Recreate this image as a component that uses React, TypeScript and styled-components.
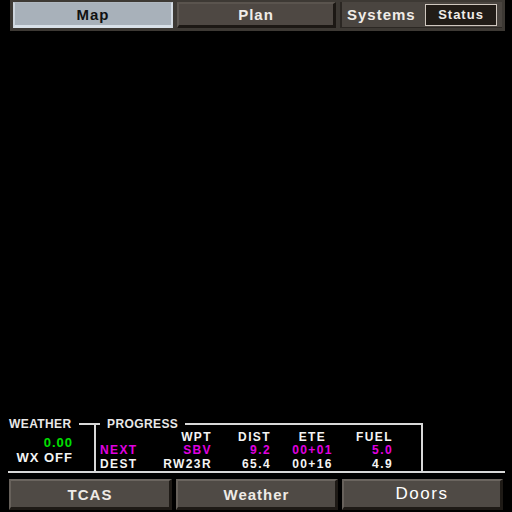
import styled, { createGlobalStyle } from "styled-components";

const GlobalStyle = createGlobalStyle`
  html, body {
    margin: 0;
    padding: 0;
    background: #000;
  }
  body {
    font-family: "Liberation Sans", Arial, sans-serif;
  }
`;

const Screen = styled.div`
  width: 512px;
  height: 512px;
  display: flex;
  flex-direction: column;
  background: #000;
  overflow: hidden;
`;

const TopFrame = styled.div`
  margin-left: 10px;
  width: 495px;
  height: 31px;
  box-sizing: border-box;
  padding: 2px 3px 3px 3px;
  background: #3d3934;
  display: grid;
  grid-template-columns: 160px 159px 1fr;
  gap: 4px;
`;

const TabButton = styled.div<{ $active?: boolean }>`
  box-sizing: border-box;
  display: flex;
  align-items: center;
  justify-content: center;
  font-size: 15px;
  font-weight: bold;
  letter-spacing: 1px;
  color: ${(p) => (p.$active ? "#111" : "#f0ece8")};
  background: ${(p) => (p.$active ? "#a8b1ba" : "#4e4843")};
  border-style: solid;
  border-width: ${(p) => (p.$active ? "1px 2px 3px 2px" : "2px 3px 3px 2px")};
  border-color: ${(p) =>
    p.$active
      ? "#b0b8c0 #d4dce4 #d8e0e8 #ccd4dc"
      : "#5a544e #1c1814 #1c1814 #5e5852"};
`;

const SystemsCell = styled.div`
  box-sizing: border-box;
  display: flex;
  align-items: center;
  justify-content: space-between;
  padding: 0 5px;
  background: #4a4540;
  border-left: 2px solid #2b2723;
  border-bottom: 1px solid #2b2723;
  font-size: 15px;
  font-weight: bold;
  letter-spacing: 1px;
  color: #f0ece8;
`;

const StatusBox = styled.div`
  box-sizing: border-box;
  width: 72px;
  height: 22px;
  display: flex;
  align-items: center;
  justify-content: center;
  background: #211c17;
  border: 1px solid #cfc7bf;
  font-size: 13px;
  letter-spacing: 1px;
`;

const MapArea = styled.div`
  flex: 1;
  background: #000;
`;

const BottomPanel = styled.div`
  margin-left: 8px;
  width: 497px;
  display: flex;
  align-items: stretch;
  border-bottom: 2px solid #d8d8d8;
  color: #f4f4f4;
  font-weight: bold;
`;

const Group = styled.fieldset<{ $boxed?: boolean }>`
  margin: 0;
  min-width: 0;
  box-sizing: border-box;
  border-style: solid;
  border-color: #d8d8d8;
  border-width: ${(p) => (p.$boxed ? "2px 2px 0 2px" : "2px 0 0 0")};
  padding: ${(p) => (p.$boxed ? "0 0 0 4px" : "0")};
  width: ${(p) => (p.$boxed ? "329px" : "86px")};
`;

const Legend = styled.legend<{ $boxed?: boolean }>`
  padding: ${(p) => (p.$boxed ? "0 7px" : "0 7px 0 1px")};
  font-size: 12px;
  line-height: 13px;
  letter-spacing: 0.4px;
  color: #e8e8e8;
`;

const WeatherBody = styled.div`
  padding: 4px 21px 0 0;
  text-align: right;
  font-size: 13px;
  line-height: 15px;
  letter-spacing: 1px;
`;

const Line = styled.div<{ $color?: string }>`
  color: ${(p) => p.$color || "#f4f4f4"};
`;

const ProgressGrid = styled.div`
  display: grid;
  grid-template-columns: 50px 62px 59px 83px 39px;
  font-size: 12px;
  line-height: 13.5px;
  letter-spacing: 1.4px;
`;

const Cell = styled.div<{ $color?: string; $align?: string }>`
  color: ${(p) => p.$color || "#f4f4f4"};
  text-align: ${(p) => p.$align || "right"};
  white-space: nowrap;
`;

const BottomBar = styled.div`
  margin: 6px 0 2px 9px;
  height: 31px;
  display: grid;
  grid-template-columns: 163px 162px 161px;
  gap: 4px;
`;

const BarButton = styled.div<{ $large?: boolean }>`
  box-sizing: border-box;
  display: flex;
  align-items: center;
  justify-content: center;
  background: #4f4a45;
  border-style: solid;
  border-width: 2px 3px 3px 2px;
  border-color: #6b655f #1e1a16 #1e1a16 #67615b;
  color: ${(p) => (p.$large ? "#ffffff" : "#eeeae6")};
  font-size: ${(p) => (p.$large ? "17px" : "15px")};
  font-weight: ${(p) => (p.$large ? "normal" : "bold")};
  letter-spacing: ${(p) => (p.$large ? "1.5px" : "1px")};
`;

const MAGENTA = "#e000e0";

const rows = [
  { label: "NEXT", wpt: "SBV", dist: "9.2", ete: "00+01", fuel: "5.0", color: MAGENTA },
  { label: "DEST", wpt: "RW23R", dist: "65.4", ete: "00+16", fuel: "4.9" },
];

export default function App() {
  return (
    <Screen>
      <GlobalStyle />
      <TopFrame>
        <TabButton $active>Map</TabButton>
        <TabButton>Plan</TabButton>
        <SystemsCell>
          <span>Systems</span>
          <StatusBox>Status</StatusBox>
        </SystemsCell>
      </TopFrame>

      <MapArea />

      <BottomPanel>
        <Group>
          <Legend>WEATHER</Legend>
          <WeatherBody>
            <Line $color="#00e000">0.00</Line>
            <Line>WX OFF</Line>
          </WeatherBody>
        </Group>
        <Group $boxed>
          <Legend $boxed>PROGRESS</Legend>
          <ProgressGrid>
            <Cell $align="left" />
            <Cell>WPT</Cell>
            <Cell>DIST</Cell>
            <Cell $align="center">ETE</Cell>
            <Cell>FUEL</Cell>
            {rows.map((r) => [
              <Cell key={r.label + "l"} $align="left" $color={r.color}>
                {r.label}
              </Cell>,
              <Cell key={r.label + "w"} $color={r.color}>
                {r.wpt}
              </Cell>,
              <Cell key={r.label + "d"} $color={r.color}>
                {r.dist}
              </Cell>,
              <Cell key={r.label + "e"} $align="center" $color={r.color}>
                {r.ete}
              </Cell>,
              <Cell key={r.label + "f"} $color={r.color}>
                {r.fuel}
              </Cell>,
            ])}
          </ProgressGrid>
        </Group>
      </BottomPanel>

      <BottomBar>
        <BarButton>TCAS</BarButton>
        <BarButton>Weather</BarButton>
        <BarButton $large>Doors</BarButton>
      </BottomBar>
    </Screen>
  );
}
